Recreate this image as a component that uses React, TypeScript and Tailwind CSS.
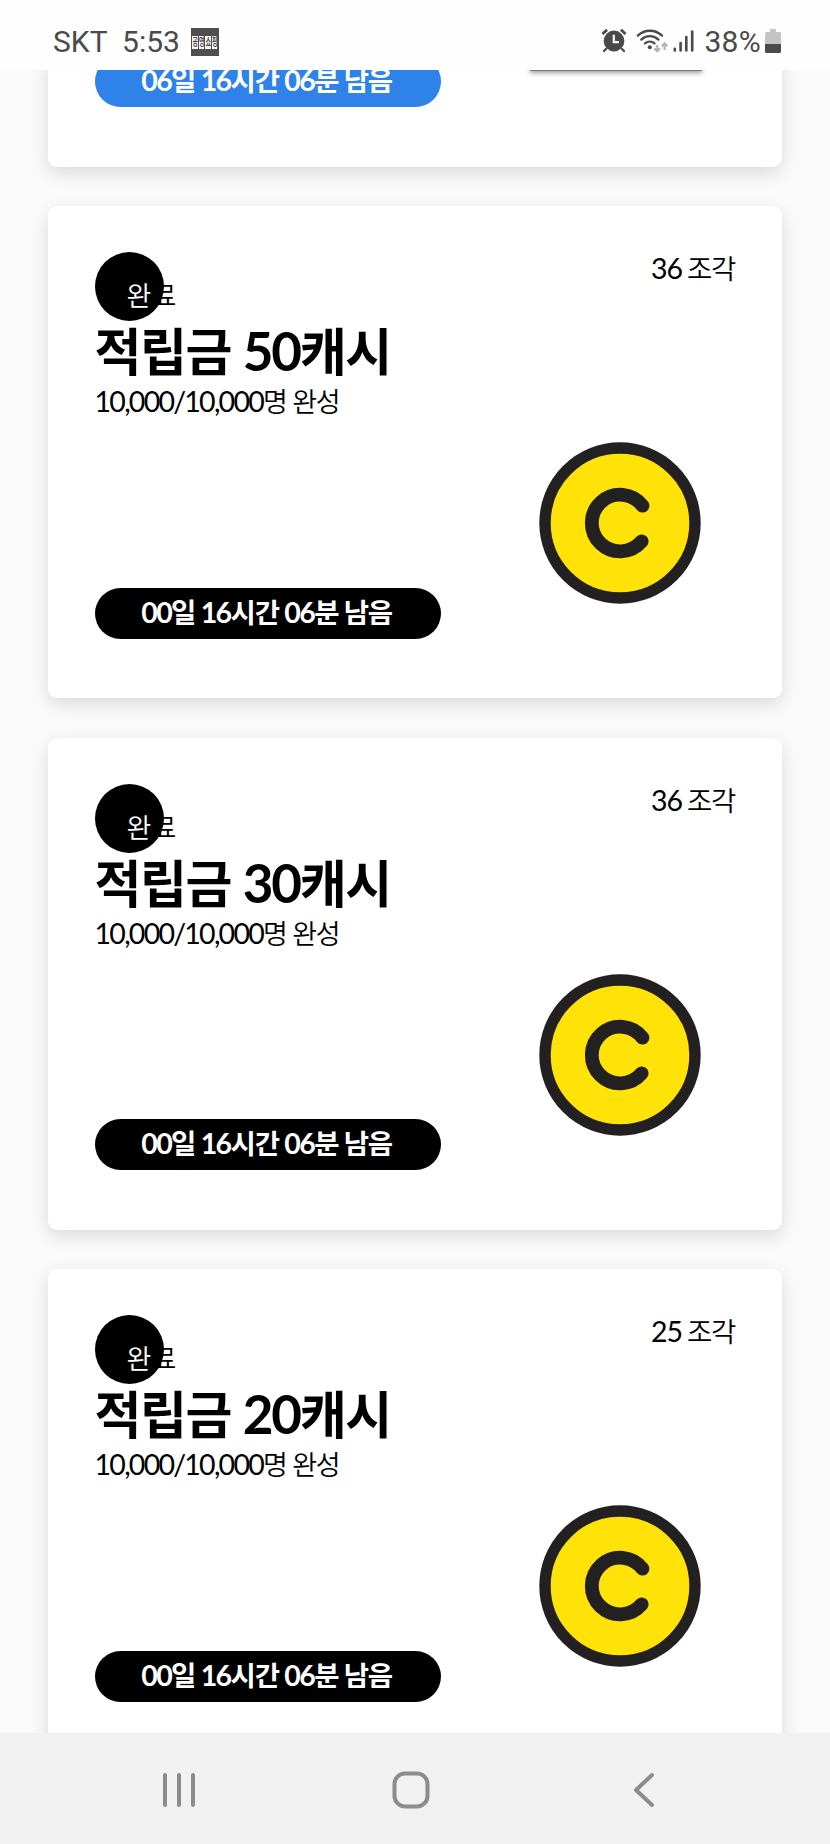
function AlarmIcon() {
  return (
    <svg className="h-[25px] w-[26px]" viewBox="0 0 26 25" fill="none">
      <path d="M5 21 L3 23 M21 21 L23 23" stroke="#4a4a4a" strokeWidth="2.4" strokeLinecap="round" />
      <circle cx="13" cy="13" r="10.4" fill="#4a4a4a" />
      <path d="M1.5 6 L6 1.8 M24.5 6 L20 1.8" stroke="#4a4a4a" strokeWidth="2.8" />
      <path d="M12.8 6.8 V14.2 H18" stroke="#fefefe" strokeWidth="2.2" />
    </svg>
  );
}

function WifiIcon() {
  return (
    <svg className="h-[25px] w-[32px]" viewBox="0 0 32 25" fill="none">
      <g stroke="#4a4a4a" strokeWidth="2.3" strokeLinecap="round">
        <path d="M1.8 7.6 A17.5 17.5 0 0 1 26 7.6" />
        <path d="M5.3 11.6 A12.5 12.5 0 0 1 22.4 11.6" />
        <path d="M9 15.4 A7.2 7.2 0 0 1 18.5 15.4" />
      </g>
      <circle cx="13.8" cy="19.3" r="2" fill="#4a4a4a" />
      <g stroke="#b5b5b5" strokeWidth="2.2">
        <path d="M21.2 17 V23 M18.4 20.4 L21.2 23.2 L24 20.4" />
        <path d="M28.6 22 V15.5 M25.8 18.2 L28.6 15.4 L31.4 18.2" />
      </g>
    </svg>
  );
}

function SignalIcon() {
  return (
    <svg className="h-[22px] w-[21px]" viewBox="0 0 21 22" fill="none">
      <path d="M1.8 18.8 V20.5 M7.6 13 V20.5 M13.3 7 V20.5 M19.2 1.5 V20.5" stroke="#4a4a4a" strokeWidth="2.6" strokeLinecap="round" />
    </svg>
  );
}

function BatteryIcon() {
  return (
    <svg className="h-[24px] w-[16px]" viewBox="0 0 16 24">
      <path d="M5 0 H11 V3 H14.5 Q16 3 16 4.5 V15 H0 V4.5 Q0 3 1.5 3 H5Z" fill="#c4c4c4" />
      <path d="M0 15 H16 V22.5 Q16 24 14.5 24 H1.5 Q0 24 0 22.5Z" fill="#4a4a4a" />
    </svg>
  );
}

function AppBadge() {
  return (
    <div className="ml-[11px] flex h-[28px] w-[28px] items-center justify-center gap-px bg-[#4f4f4f]">
      {["공", "영", "쇼", "핑"].map((c) => (
        <span
          key={c}
          className="flex h-[13px] w-[5.5px] items-center justify-center bg-[#fefefe] font-['Noto_Sans_CJK_KR',sans-serif] text-[6px] leading-none font-bold text-[#4a4a4a]"
        >
          <span className="scale-y-[1.8]">{c}</span>
        </span>
      ))}
    </div>
  );
}

function StatusBar() {
  return (
    <header className="relative z-10 flex h-[70px] shrink-0 items-start bg-[#fefefe] pt-[28px] pr-[49px] pl-[53px] font-['Roboto',sans-serif] text-[30px] leading-[28px] text-[#4a4a4a]">
      <span>SKT</span>
      <span className="ml-[14.5px]">5:53</span>
      <AppBadge />
      <div className="ml-auto flex items-start">
        <span className="mr-[9px]"><AlarmIcon /></span>
        <span className="mr-[5px]"><WifiIcon /></span>
        <span className="mt-[2px] mr-[10px]"><SignalIcon /></span>
        <span className="mr-[4px] tracking-[0.3px]">38%</span>
        <span className="mt-[1px]"><BatteryIcon /></span>
      </div>
    </header>
  );
}

function Coin() {
  return (
    <svg className="h-[162px] w-[162px]" viewBox="-81 -81 162 162" fill="none">
      <circle r="75" fill="#ffe308" stroke="#222021" strokeWidth="11.4" />
      <path d="M22.5 -17.3 A28.3 28.3 0 1 0 21.7 18.3" stroke="#222021" strokeWidth="13.8" strokeLinecap="round" />
    </svg>
  );
}

/* Digits are set slightly larger than the Hangul around them. */
function Mixed({ text, digits }: { text: string; digits: string }) {
  return (
    <>
      {text.split(/([\d,/]+)/).map((part, i) =>
        i % 2 === 1 ? (
          <span key={i} className={digits}>
            {part}
          </span>
        ) : (
          part
        ),
      )}
    </>
  );
}

function TimeLeft({ text, live = false }: { text: string; live?: boolean }) {
  return (
    <div
      className={`flex h-[51px] w-[346px] items-center justify-center rounded-full pr-[2px] text-[27.5px] leading-[48px] font-bold tracking-[-1.2px] whitespace-nowrap text-white ${
        live ? "bg-[#2e82e8]" : "bg-black"
      }`}
    >
      <span className="-mt-[2px]">
        <Mixed text={text} digits="text-[28.5px] tracking-[-1.6px]" />
      </span>
    </div>
  );
}

type Prize = { cash: number; pieces: number; left: string };

const prizes: Prize[] = [
  { cash: 50, pieces: 36, left: "00일 16시간 06분 남음" },
  { cash: 30, pieces: 36, left: "00일 16시간 06분 남음" },
  { cash: 20, pieces: 25, left: "00일 16시간 06분 남음" },
];

function LiveCardEnd() {
  return (
    <section className="flex h-[111px] shrink-0 items-start justify-between rounded-b-[9px] bg-white pr-[80px] pl-[46.2px] shadow-[0_6px_18px_rgba(0,0,0,0.13)]">
      <TimeLeft text="06일 16시간 06분 남음" live />
      <div className="h-[15px] w-[172px] bg-[#71806f] shadow-[0_2px_5px_rgba(0,0,0,0.4)]" />
    </section>
  );
}

function PrizeCard({ prize }: { prize: Prize }) {
  return (
    <section className="flex h-[492px] shrink-0 justify-between rounded-[9px] bg-white pt-[46px] pr-[46px] pb-[59.5px] pl-[46.2px] shadow-[0_6px_18px_rgba(0,0,0,0.13)]">
      <div className="flex flex-col items-start">
        <div className="flex h-[69px] w-[69px] shrink-0 rounded-full bg-black pt-[29px] pl-[32px] text-[27px] leading-[30px] font-[350] whitespace-nowrap">
          <span className="text-white">완</span>
          <span className="text-black">료</span>
        </div>
        <h2 className="h-[60px] text-[51px] leading-[60px] font-bold tracking-[-1.5px] whitespace-nowrap [word-spacing:1px]">
          <Mixed text={`적립금 ${prize.cash}캐시`} digits="text-[53px] tracking-[-2.2px]" />
        </h2>
        <p className="mt-[4px] h-[32px] text-[27px] leading-[32px] font-[350] tracking-[-1.4px] whitespace-nowrap">
          <Mixed text="10,000/10,000명 완성" digits="text-[28.5px] font-normal tracking-[-1.75px]" />
        </p>
        <div className="mt-auto">
          <TimeLeft text={prize.left} />
        </div>
      </div>
      <div className="flex flex-col items-end">
        <span className="mr-px h-[32px] text-[27.5px] leading-[32px] font-[350] tracking-[-1.3px] whitespace-nowrap [word-spacing:-1px]">
          <Mixed text={`${prize.pieces} 조각`} digits="text-[28.5px] font-normal tracking-[-1.1px]" />
        </span>
        <div className="mt-[158px] mr-[35px]">
          <Coin />
        </div>
      </div>
    </section>
  );
}

function NavBar() {
  return (
    <nav className="relative z-10 flex h-[111px] shrink-0 items-start bg-[#f1f1f1] pt-[37px] pl-[161px]">
      <svg className="h-[40px] w-[36px]" viewBox="0 0 36 40" fill="none" stroke="#8c8c8c" strokeWidth="4" strokeLinecap="round">
        <path d="M4 5 V35 M18 5 V35 M32 5 V35" />
      </svg>
      <svg className="ml-[194px] h-[40px] w-[40px]" viewBox="0 0 40 40" fill="none" stroke="#8c8c8c" strokeWidth="4">
        <rect x="3.5" y="3.5" width="33" height="33" rx="10.5" />
      </svg>
      <svg className="ml-[200px] h-[40px] w-[26px]" viewBox="0 0 26 40" fill="none" stroke="#8c8c8c" strokeWidth="4" strokeLinecap="round" strokeLinejoin="round">
        <path d="M21 5 L5 20 L21 35" />
      </svg>
    </nav>
  );
}

export default function App() {
  return (
    <div className="flex h-[1844px] w-[830px] flex-col overflow-hidden bg-[#fafafa] font-['Lato','Noto_Sans_CJK_KR',sans-serif] text-black">
      <StatusBar />
      <main className="flex min-h-0 flex-1 flex-col overflow-hidden pr-[48px] pl-[48.4px]">
        <div className="-mt-[14.5px] flex flex-col gap-[39.5px]">
          <LiveCardEnd />
          {prizes.map((p) => (
            <PrizeCard key={p.cash} prize={p} />
          ))}
        </div>
      </main>
      <NavBar />
    </div>
  );
}
